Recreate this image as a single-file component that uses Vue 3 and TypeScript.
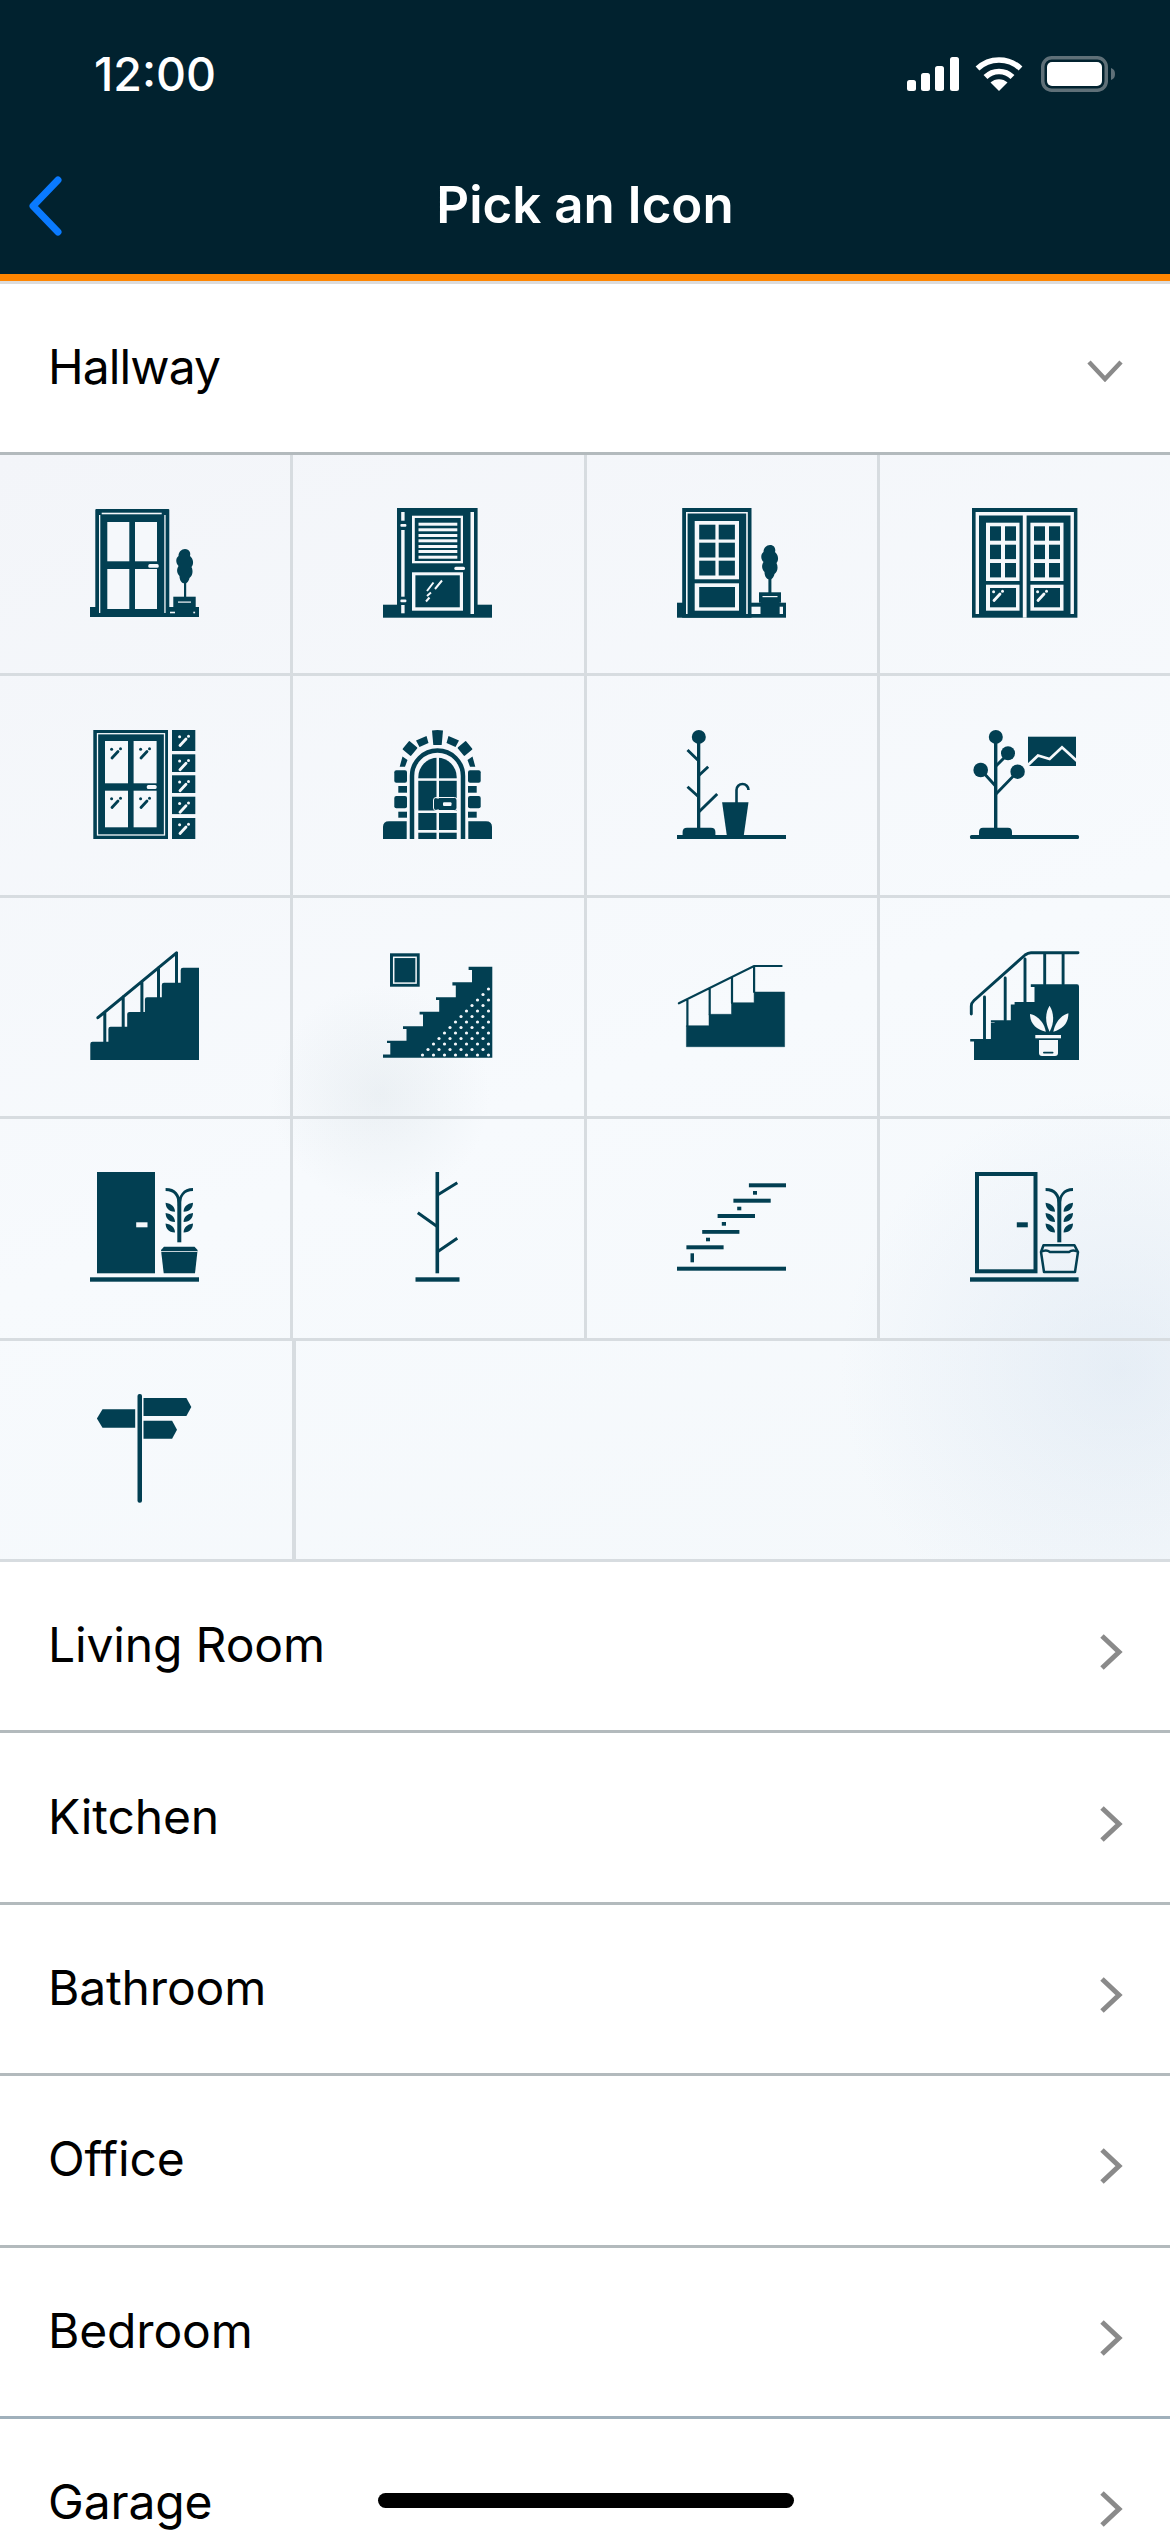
<script setup lang="ts">
const rows: string[] = ['Living Room', 'Kitchen', 'Bathroom', 'Office', 'Bedroom', 'Garage']

const dots: { x: number; y: number }[] = []
for (let r = 0; r < 13; r++) {
  const y = 104 - r * 5.5
  const offset = r % 2 === 0 ? 0 : 5.5
  for (let x = 105.5 - offset; x >= 39 + r * 5.4; x -= 11) {
    dots.push({ x, y })
  }
}

const tiles: number[][] = [[0, 21], [24.3, 17.7], [45.3, 17.7], [66.7, 17.4], [88, 21]]
const blindLines: number[] = [14.7, 20.3, 26, 31.3, 37, 42, 47.7]
const panes: number[] = [18.3, 36.7, 55]
</script>

<template>
  <div class="screen">
    <svg class="defs" width="0" height="0" aria-hidden="true">
      <defs>
        <g id="sparkle">
          <path d="M2 10.500 L8 4" stroke="currentColor" stroke-width="2.800" stroke-linecap="round" fill="none" />
          <circle cx="1.600" cy="1.800" r="1.500" fill="currentColor" />
          <circle cx="10.500" cy="1.200" r="1.500" fill="currentColor" />
        </g>
        <g id="bush">
          <path d="M9.500 0 C14 0 15.500 4 14.500 7 C18 10 18.500 15 16 18 C18 22 17 27 14 29 C13 33 11 34.500 9.500 34.500 C6 34.500 4 31 4 27 C1 24 1 20 3 17 C0 14 0 9 3 7 C3 3 6 0 9.500 0Z" />
        </g>
        <g id="plant">
          <rect x="87.300" y="26" width="4" height="44.300" />
          <path d="M89.300 34 C89.300 24 85 17.500 75.600 17.500 M89.300 34 C89.300 24 94 17.500 103 17.500" fill="none" stroke="currentColor" stroke-width="2.800" />
          <path d="M85 39.700 C78 39.700 75.600 35 75.600 30.700 C81.500 31.500 85 35 85 39.700Z M85 50 C78 50 75.600 45.300 75.600 41 C81.500 41.800 85 45.300 85 50Z M85 60.500 C78 60.500 75.600 55.800 75.600 51.500 C81.500 52.300 85 55.800 85 60.500Z" />
          <path d="M93.600 39.700 C100.600 39.700 103 35 103 30.700 C97 31.500 93.600 35 93.600 39.700Z M93.600 50 C100.600 50 103 45.300 103 41 C97 41.800 93.600 45.300 93.600 50Z M93.600 60.500 C100.600 60.500 103 55.800 103 51.500 C97 52.300 93.600 55.800 93.600 60.500Z" />
        </g>
      </defs>
    </svg>

    <header class="header">
      <div class="status">
        <span class="time">12:00</span>
        <div class="status-icons">
          <svg class="signal" width="52" height="34" viewBox="0 0 52 34">
            <rect x="0" y="23" width="9" height="11" rx="2.500" />
            <rect x="14" y="16" width="9" height="18" rx="2.500" />
            <rect x="28" y="9" width="9" height="25" rx="2.500" />
            <rect x="43" y="0" width="9" height="34" rx="2.500" />
          </svg>
          <svg class="wifi" width="48" height="35" viewBox="0 0 48 35">
            <path d="M24 35 L15.500 26.500 C20 22 28 22 32.500 26.500Z" fill="#fff" />
            <path d="M10.500 21 C18 13.500 30 13.500 37.500 21" fill="none" stroke="#fff" stroke-width="5.500" />
            <path d="M2.500 12.500 C14.500 1 33.500 1 45.500 12.500" fill="none" stroke="#fff" stroke-width="5.500" />
          </svg>
          <svg class="battery" width="74" height="36" viewBox="0 0 74 36">
            <rect x="1.750" y="1.750" width="63.500" height="32.500" rx="9" fill="none" stroke="#5f7078" stroke-width="3.500" />
            <rect x="6" y="6" width="55" height="24" rx="5" fill="#fff" />
            <path d="M70 12 C73 13 74 15 74 18 C74 21 73 23 70 24Z" fill="#5f7078" />
          </svg>
        </div>
      </div>
      <div class="nav">
        <svg class="back" width="38" height="60" viewBox="0 0 38 60">
          <path d="M31 4 L6 30 L31 56" fill="none" stroke="#0a7aff" stroke-width="7" stroke-linecap="round" stroke-linejoin="round" />
        </svg>
        <h1 class="title">Pick an Icon</h1>
      </div>
    </header>

    <div class="row open">
      <span>Hallway</span>
      <svg class="chev-down" width="36" height="22" viewBox="0 0 36 22">
        <path d="M2 2 L18 19 L34 2" fill="none" stroke="#8a8a8a" stroke-width="4.500" />
      </svg>
    </div>

    <div class="grid">
      <!-- door with two by two lights and a small tree -->
      <div class="cell">
        <svg class="icon" viewBox="0 0 110 110">
          <rect x="5.300" y="1" width="74" height="108" rx="1" />
          <rect x="0" y="99" width="109" height="10" />
          <rect class="lt" x="17.300" y="14" width="22" height="39.300" />
          <rect class="lt" x="45" y="14" width="22" height="39.300" />
          <rect class="lt" x="17.300" y="61" width="22" height="40" />
          <rect class="lt" x="45" y="61" width="22" height="40" />
          <rect class="lt" x="58.300" y="56" width="10.400" height="3.800" rx="1.500" />
          <rect class="lt" x="9" y="7" width="1.300" height="98" />
          <rect class="lt" x="74.300" y="7" width="1.300" height="98" />
          <rect class="lt" x="11.700" y="4.700" width="60" height="1.600" />
          <use href="#bush" x="85.500" y="41" />
          <rect x="94" y="73" width="2.200" height="17" />
          <rect x="83.300" y="88.700" width="22.400" height="12" />
          <rect class="lt" x="88" y="93.500" width="13" height="1.200" />
          <rect class="lt" x="80" y="103.700" width="5" height="1.600" />
          <rect class="lt" x="103.300" y="103.700" width="1.800" height="1.600" />
        </svg>
      </div>

      <!-- door with blinds -->
      <div class="cell">
        <svg class="icon" viewBox="0 0 110 110">
          <rect x="14" y="0" width="80.600" height="108" />
          <rect x="0" y="96.700" width="109" height="13" />
          <rect class="lt" x="18.200" y="4" width="3.400" height="8.700" />
          <rect class="lt" x="17.400" y="16" width="6" height="2.800" rx="1" />
          <rect class="lt" x="18.200" y="22" width="3.400" height="66.700" />
          <rect class="lt" x="17.400" y="91.500" width="6" height="2.800" rx="1" />
          <rect class="lt" x="18.200" y="97" width="3.400" height="8.300" />
          <rect class="lt" x="87.500" y="4" width="3.500" height="102" />
          <rect x="29" y="7.700" width="51" height="47.600" class="lt" />
          <rect x="31.800" y="10" width="45.900" height="43" />
          <rect v-for="y in blindLines" :key="y" class="lt" x="35.500" :y="y" width="38.800" height="3" />
          <rect class="lt" x="71.300" y="58.700" width="10.700" height="3.300" rx="1.500" />
          <rect class="lt" x="29" y="64.300" width="51" height="38.400" />
          <rect x="32.400" y="67.300" width="44.400" height="32" />
          <path class="lts" d="M50.500 74.500 L44 83 M59 72.500 L52 81 M48 84.500 L44 88 M43 93.500 L46.500 89.500" stroke-width="2" fill="none" />
        </svg>
      </div>

      <!-- door with six lights and tree -->
      <div class="cell">
        <svg class="icon" viewBox="0 0 110 110">
          <rect x="0" y="94.700" width="109" height="15" />
          <rect x="5.200" y="0" width="69.300" height="109.700" />
          <path class="lts" d="M9.800 106 V4.800 H70 V106" fill="none" stroke-width="1.600" />
          <rect class="lt" x="17.700" y="13" width="44.300" height="58.300" />
          <template v-for="y in [16.700, 34.700, 52.700]" :key="y">
            <rect x="22.200" :y="y" width="16.200" height="14.800" />
            <rect x="41.700" :y="y" width="16.200" height="14.800" />
          </template>
          <rect class="lt" x="17.700" y="75.300" width="44.300" height="27.400" />
          <rect x="22.200" y="79" width="35.800" height="20.300" />
          <rect class="lt" x="74.500" y="98.700" width="9.500" height="7.300" />
          <rect class="lt" x="102.300" y="98.700" width="3.700" height="7.300" />
          <use href="#bush" x="83.500" y="37" />
          <rect x="91.400" y="70" width="3" height="16" />
          <rect x="82" y="84.300" width="22" height="10.400" />
          <rect x="83.500" y="94" width="19" height="15" />
          <rect class="lt" x="85.500" y="88" width="15" height="1.200" />
        </svg>
      </div>

      <!-- double doors -->
      <div class="cell">
        <svg class="icon" viewBox="0 0 110 110">
          <rect x="2" y="0" width="105.400" height="109.700" />
          <path class="lts" d="M7.300 106 V5.700 H102.200 V106" fill="none" stroke-width="3.400" />
          <rect class="lt" x="52.800" y="7" width="3.800" height="102.700" />
          <rect class="lt" x="16" y="14.700" width="33.500" height="58.300" />
          <rect class="lt" x="60.400" y="14.700" width="33.100" height="58.300" />
          <template v-for="y in panes" :key="y">
            <rect x="20" :y="y" width="11" height="14.400" />
            <rect x="35" :y="y" width="11" height="14.400" />
            <rect x="64" :y="y" width="11" height="14.400" />
            <rect x="79" :y="y" width="11" height="14.400" />
          </template>
          <rect class="lt" x="16" y="76.700" width="33.500" height="26" />
          <rect class="lt" x="60.400" y="76.700" width="33.100" height="26" />
          <rect x="20" y="80" width="26" height="19.300" />
          <rect x="64" y="80" width="26" height="19.300" />
          <use class="lc" href="#sparkle" x="22" y="82" />
          <use class="lc" href="#sparkle" x="66" y="82" />
        </svg>
      </div>

      <!-- door with tiles -->
      <div class="cell">
        <svg class="icon" viewBox="0 0 110 110">
          <rect x="3.300" y="0" width="74.700" height="109" />
          <rect class="lts" x="7.500" y="3.700" width="67" height="101.300" fill="none" stroke-width="1.300" />
          <rect class="lt" x="15" y="11" width="23" height="42.300" />
          <rect class="lt" x="43.600" y="11" width="23" height="42.300" />
          <rect class="lt" x="15" y="60.700" width="23" height="36.600" />
          <rect class="lt" x="43.600" y="60.700" width="23" height="36.600" />
          <rect class="lt" x="56.800" y="55" width="9.800" height="4" rx="1.500" />
          <use class="dc" href="#sparkle" x="20" y="17.500" />
          <use class="dc" href="#sparkle" x="49" y="17.500" />
          <use class="dc" href="#sparkle" x="20" y="67" />
          <use class="dc" href="#sparkle" x="49" y="67" />
          <template v-for="t in tiles" :key="t[0]">
            <rect x="82" :y="t[0]" width="23.300" :height="t[1]" />
            <use class="lc" href="#sparkle" x="88" :y="t[0] + 5" />
          </template>
        </svg>
      </div>

      <!-- arched door -->
      <div class="cell">
        <svg class="icon" viewBox="0 0 110 110">
          <path d="M0 109 V97 Q0 91.300 6 91.300 H23.700 V109Z M109 109 V97 Q109 91.300 103 91.300 H85.300 V109Z" />
          <path d="M49 0.500 Q54.500 -0.500 60 0.500 L58.700 15 H50.300Z" />
          <path d="M33 10.500 L43.500 6 L45.500 13 L36.500 17Z M76 10.500 L65.500 6 L63.500 13 L72.500 17Z" />
          <rect x="21.500" y="13" width="11" height="11" rx="1" transform="rotate(40 27 18.500)" />
          <rect x="76.500" y="13" width="11" height="11" rx="1" transform="rotate(-40 82 18.500)" />
          <path d="M19.500 26.500 L24.500 30 L22 36.700 H16.700Z M89.500 26.500 L84.500 30 L87 36.700 H92.300Z" />
          <rect x="11.300" y="40.300" width="12.700" height="12.400" rx="2" />
          <rect x="85" y="40.300" width="12.700" height="12.400" rx="2" />
          <rect x="15.300" y="56" width="8.700" height="6.700" />
          <rect x="85" y="56" width="8.700" height="6.700" />
          <rect x="11.300" y="66" width="12.700" height="12.300" rx="2" />
          <rect x="85" y="66" width="12.700" height="12.300" rx="2" />
          <rect x="15.300" y="81.700" width="8.700" height="6" />
          <rect x="85" y="81.700" width="8.700" height="6" />
          <path class="st" d="M29 109 V46 A25.500 25.500 0 0 1 80 46 V109" fill="none" stroke-width="4.500" />
          <path d="M35.300 109 V47 A19.200 19.200 0 0 1 73.700 47 V109Z" />
          <rect class="lt" x="53.500" y="27" width="2.500" height="82" />
          <rect class="lt" x="35" y="48.300" width="39" height="2.500" />
          <rect class="lt" x="35" y="80.500" width="39" height="2.500" />
          <rect class="lt" x="35" y="100" width="39" height="2.700" />
          <rect x="50.500" y="68.500" width="23.500" height="11" rx="2" />
          <rect class="lts" x="50.500" y="67.500" width="23.500" height="13" rx="2.500" fill="none" stroke-width="1" />
          <rect class="lt" x="60" y="72.300" width="8.500" height="3.800" rx="1" />
        </svg>
      </div>

      <!-- coat stand and umbrella -->
      <div class="cell">
        <svg class="icon" viewBox="0 0 110 110">
          <rect x="0" y="105" width="109" height="4" />
          <path d="M5.600 107 V102 Q5.600 97.700 10 97.700 H34 Q38.400 97.700 38.400 102 V107Z" />
          <rect x="20" y="8" width="3.300" height="92" />
          <circle cx="21.800" cy="6.900" r="7" />
          <path class="st" d="M10.500 20 L21.800 31 M31.200 36.700 L21.800 45.500 M10.500 56.700 L21.800 67 M40.200 64 L21.800 82" fill="none" stroke-width="2.900" />
          <path d="M45.100 72.300 H71.500 L66.600 106.700 H50Z" />
          <path class="st" d="M59.500 73 V60 a6 6 0 0 1 12 0" fill="none" stroke-width="2.600" />
        </svg>
      </div>

      <!-- coat tree and picture -->
      <div class="cell">
        <svg class="icon" viewBox="0 0 110 110">
          <rect x="0" y="105" width="109" height="4" rx="1.500" />
          <path d="M9 107 V102 Q9 97.700 13 97.700 H38 Q42 97.700 42 102 V107Z" />
          <rect x="24" y="8" width="3.400" height="92" />
          <circle cx="25.800" cy="6.900" r="7" />
          <circle cx="38" cy="23.300" r="7" />
          <circle cx="10.700" cy="40" r="7.300" />
          <circle cx="47.600" cy="41.700" r="7.200" />
          <path class="st" d="M26 36 L38 24 M25.500 56 L11 40 M26 64 L47.600 41.700" fill="none" stroke-width="2.900" />
          <rect x="58" y="6.700" width="48" height="29.300" />
          <path class="lts" d="M57 36 L68 25.500 L79.600 29 L92 17.300 L107 31" fill="none" stroke-width="2.800" />
        </svg>
      </div>

      <!-- stairs with rail -->
      <div class="cell">
        <svg class="icon" viewBox="0 0 110 110">
          <path d="M0.300 109 V93 Q0.300 90.700 2.500 90.700 H18.400 V78 Q18.400 75.700 20.500 75.700 H37.200 V63 Q37.200 61 39.500 61 H54.900 V48.500 Q54.900 46.300 57 46.300 H71.800 V34 Q71.800 31.700 74 31.700 H90.700 V19 Q90.700 16.700 93 16.700 H109 V109Z" />
          <path class="st" d="M7.900 66.700 L86.500 1.800 M14.800 61 V91 M33.200 45.500 V76 M51.900 30.500 V61 M68.500 16.500 V46.500 M86.500 2 V32" fill="none" stroke-width="3" stroke-linecap="round" />
        </svg>
      </div>

      <!-- stairs with dots and picture -->
      <div class="cell">
        <svg class="icon" viewBox="0 0 110 110">
          <rect x="7" y="2.300" width="29.700" height="33.400" />
          <rect class="lts" x="10.700" y="6.300" width="22.400" height="25.800" fill="none" stroke-width="1.500" />
          <path d="M85.600 15.700 H109.300 V106.700 H0 V103.500 H7.300 V92 H4 V89.700 H23.500 V78 H20 V75.300 H40 V63.500 H36.600 V60.700 H56.200 V49 H53 V46.300 H72.800 V34.500 H69.400 V31.300 H89 V19 H85.600Z" />
          <circle v-for="d in dots" :key="d.x + '-' + d.y" class="lt" :cx="d.x" :cy="d.y" r="1.600" />
        </svg>
      </div>

      <!-- stairs with gaps -->
      <div class="cell">
        <svg class="icon" viewBox="0 0 110 110">
          <path class="st" d="M9.400 95.700 V74.700 H32 V63.300 H54.500 V51.700 H77.100 V41 H107.600 V95.700Z" stroke-width="0.500" stroke-linejoin="round" />
          <path class="st" d="M1.900 52.300 L77 15 H104.600 M10.400 49 V75 M32.700 38 V63.500 M55 27 V52 M77.100 15 V41" fill="none" stroke-width="2.200" stroke-linecap="round" />
        </svg>
      </div>

      <!-- stairs with plant -->
      <div class="cell">
        <svg class="icon" viewBox="0 0 110 110">
          <path d="M4 109 Q4 107 4 106 V90.500 H0.200 V88 H20.900 V72 H24.600 V71.500 H20.900 V69.300 H40.800 V53.500 H44.600 V51 H64.500 V36 H60.800 V33.300 H107 Q109 33.300 109 35.500 V109Z" />
          <path class="st" d="M1.300 63 V55 Q1.300 52 4 49.500 L55 4 Q58 1.700 61 1.700 H108 M14.500 46 V88 M35.200 27 V69.300 M55 8 V51 M74.700 2 V33.300 M93.100 2 V33.300" fill="none" stroke-width="2.900" stroke-linecap="round" />
          <path class="lt" d="M79.600 54.700 C83 60 85.500 70 79.600 80.700 C74 70 76 60 79.600 54.700Z" />
          <path class="lt" d="M60 63 C66 64 74 70 75.800 80.700 C66 78 60 73 60 63Z" />
          <path class="lt" d="M98.400 62.300 C92 64 85.500 70 83.300 80.700 C93 78 98.400 72 98.400 62.300Z" />
          <rect class="lt" x="65.300" y="84" width="25.700" height="3.300" />
          <path class="lt" d="M69 89 H88 V102 Q88 105 85 105 H72 Q69 105 69 102Z" />
          <rect x="73" y="100.700" width="10.500" height="1.800" rx="0.900" />
        </svg>
      </div>

      <!-- solid door with plant -->
      <div class="cell">
        <svg class="icon" viewBox="0 0 110 110">
          <rect x="7" y="0" width="58" height="101.300" />
          <rect class="lt" x="46.200" y="50.300" width="11.300" height="5" />
          <rect x="0" y="105.300" width="109" height="4.400" />
          <use href="#plant" />
          <path d="M71 78 L74 74.700 H104.500 L107.600 78 L105 101.300 H73.700Z" />
          <rect class="lt" x="71" y="79" width="36.600" height="0.800" />
        </svg>
      </div>

      <!-- bare coat stand -->
      <div class="cell">
        <svg class="icon" viewBox="0 0 110 110">
          <rect x="52.500" y="0" width="3.600" height="101.300" />
          <rect x="32.500" y="105.300" width="44" height="4.400" />
          <path class="st" d="M54.500 23 L74.300 10.700 M54.500 54.700 L34.800 40.700 M54.500 79.700 L74.300 66.300" fill="none" stroke-width="3" />
        </svg>
      </div>

      <!-- floating stairs -->
      <div class="cell">
        <svg class="icon" viewBox="0 0 110 110">
          <rect x="0" y="94.700" width="109" height="4" />
          <rect x="9.400" y="73.300" width="37.200" height="4" />
          <rect x="25.200" y="58" width="37.200" height="3.800" />
          <rect x="40.600" y="42" width="37.400" height="4" />
          <rect x="56.400" y="26.700" width="37.300" height="4" />
          <rect x="71.900" y="11.300" width="37.100" height="4" />
          <rect x="13.500" y="81.300" width="3.500" height="9" />
          <rect x="29" y="65.700" width="4" height="3.600" />
          <rect x="44.800" y="50" width="4.200" height="3.700" />
          <rect x="60.200" y="34.700" width="4.100" height="3.600" />
          <rect x="76" y="19" width="4" height="3.700" />
        </svg>
      </div>

      <!-- outlined door with plant -->
      <div class="cell">
        <svg class="icon" viewBox="0 0 110 110">
          <rect class="st" x="7" y="2" width="58.500" height="97.300" fill="none" stroke-width="4" />
          <rect x="46.800" y="50.300" width="11" height="5" />
          <rect x="0" y="105.300" width="108.600" height="4.400" />
          <use href="#plant" />
          <path class="st" d="M73.500 73.300 H104.500 L108 80 L105 100 H74 L71 80Z M71 80 Q76 77 80 80 H99 Q103 77 108 80" fill="none" stroke-width="2.500" stroke-linejoin="round" />
        </svg>
      </div>

      <!-- signpost -->
      <div class="cell sign">
        <svg class="icon" viewBox="0 0 110 110">
          <rect x="48.500" y="0" width="4.500" height="108.700" rx="2" />
          <path d="M54.500 4 H97.400 L102.300 13 L97.400 22 H54.500Z" />
          <path d="M46.200 15.300 H13.500 L7.900 24.500 L13.500 33.700 H46.200Z" />
          <path d="M54.500 26.700 H83.100 L88 35.700 L83.100 44.700 H54.500Z" />
        </svg>
      </div>
      <div class="cell spacer"></div>
    </div>

    <div v-for="(name, i) in rows" :key="name" class="row" :class="{ blue: i === 4 }">
      <span>{{ name }}</span>
      <svg class="chev-right" width="24" height="36" viewBox="0 0 24 36">
        <path d="M3 2 L20 18 L3 34" fill="none" stroke="#8a8a8a" stroke-width="5" />
      </svg>
    </div>

    <div class="home"></div>
  </div>
</template>

<style scoped>
.screen {
  position: relative;
  width: 1170px;
  height: 2532px;
  overflow: hidden;
  background: #fff;
  font-family: Inter, "Liberation Sans", sans-serif;
  color: #000;
}
.defs {
  position: absolute;
}
.header {
  height: 274px;
  background: #01222f;
  border-bottom: 7px solid #ff8500;
  color: #fff;
}
.status {
  height: 130px;
  padding: 0 55px 0 94px;
  display: flex;
  justify-content: space-between;
  box-sizing: border-box;
}
.time {
  margin-top: 47px;
  font-size: 46.5px;
  line-height: 54px;
  font-weight: 500;
}
.status-icons {
  margin-top: 56px;
  display: flex;
  align-items: flex-start;
  gap: 16px;
}
.signal {
  margin-top: 1px;
  fill: #fff;
}
.battery {
  margin-left: 2px;
}
.nav {
  position: relative;
  height: 144px;
  display: flex;
  align-items: center;
  justify-content: center;
}
.back {
  position: absolute;
  left: 27px;
  top: 46px;
}
.title {
  margin: 6px 0 0;
  font-size: 51px;
  line-height: 60px;
  font-weight: 600;
  letter-spacing: 0;
}
.row {
  height: 171.4px;
  box-sizing: border-box;
  padding: 0 47px 0 48px;
  display: flex;
  align-items: center;
  justify-content: space-between;
  border-bottom: 3px solid #b3babd;
  font-size: 48px;
  letter-spacing: -0.15px;
}
.row span {
  margin-bottom: 3px;
}
.row.blue {
  border-bottom-color: #a0b0bb;
}
.row.open {
  height: 174px;
  border-top: 3px solid #dcdcdc;
  padding-right: 47px;
  letter-spacing: -0.9px;
}
.chev-down {
  margin-top: 6px;
}
.chev-right {
  margin-top: 12px;
}
.grid {
  display: grid;
  grid-template-columns: repeat(3, 293.25px) 1fr;
  grid-auto-rows: 221.4px;
  background:
    radial-gradient(circle at 380px 640px, rgba(190, 203, 210, 0.2), rgba(190, 203, 210, 0) 110px),
    radial-gradient(circle at 1120px 915px, rgba(196, 213, 232, 0.3), rgba(196, 213, 232, 0) 280px),
    linear-gradient(160deg, #f3f5f9 0%, #f7fafd 55%, #f4f8fb 100%);
}
.cell {
  display: flex;
  align-items: center;
  justify-content: center;
  padding-bottom: 2px;
  box-sizing: border-box;
  border-right: 3px solid #d7dce0;
  border-bottom: 3px solid #d7dce0;
}
.cell:nth-child(4n) {
  border-right: 0;
}
.cell.sign {
  width: 296px;
  border-right-width: 4px;
  padding-right: 4px;
}
.cell.spacer {
  grid-column: 2 / 5;
  border-right: 0;
}
.icon {
  width: 110px;
  height: 110px;
  color: #023f52;
  fill: #023f52;
  overflow: visible;
}
.lt {
  fill: #f5f8fb;
}
.lts {
  stroke: #f5f8fb;
}
.st {
  stroke: #023f52;
}
.lc {
  color: #f5f8fb;
}
.dc {
  color: #023f52;
}
.home {
  position: absolute;
  left: 378px;
  bottom: 24px;
  width: 416px;
  height: 15px;
  border-radius: 8px;
  background: #000;
}
</style>

<style>
html,
body {
  margin: 0;
  background: #fff;
}
</style>
